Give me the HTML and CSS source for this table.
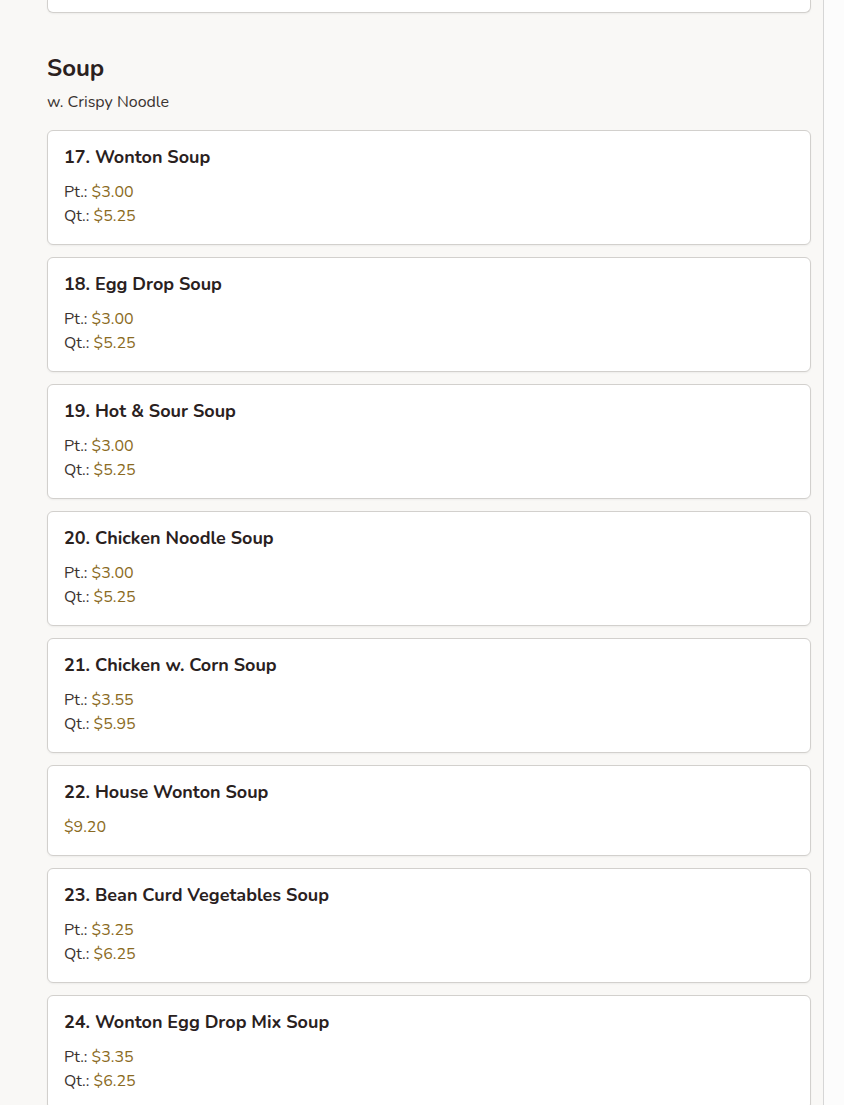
FILE: index.html
```html
<!DOCTYPE html>
<html>
<head>
<meta charset="utf-8">
<link rel="stylesheet" href="styles.css">
</head>
<body>
<main class="menu">
  <div class="card card-tail"></div>

  <section class="section">
    <h2 class="section-title">Soup</h2>
    <p class="section-note">w. Crispy Noodle</p>

    <div class="items">
      <article class="card">
        <h3 class="item-name">17. Wonton Soup</h3>
        <div class="price-row">Pt.: <span class="price">$3.00</span></div>
        <div class="price-row">Qt.: <span class="price">$5.25</span></div>
      </article>
      <article class="card">
        <h3 class="item-name">18. Egg Drop Soup</h3>
        <div class="price-row">Pt.: <span class="price">$3.00</span></div>
        <div class="price-row">Qt.: <span class="price">$5.25</span></div>
      </article>
      <article class="card">
        <h3 class="item-name">19. Hot &amp; Sour Soup</h3>
        <div class="price-row">Pt.: <span class="price">$3.00</span></div>
        <div class="price-row">Qt.: <span class="price">$5.25</span></div>
      </article>
      <article class="card">
        <h3 class="item-name">20. Chicken Noodle Soup</h3>
        <div class="price-row">Pt.: <span class="price">$3.00</span></div>
        <div class="price-row">Qt.: <span class="price">$5.25</span></div>
      </article>
      <article class="card">
        <h3 class="item-name">21. Chicken w. Corn Soup</h3>
        <div class="price-row">Pt.: <span class="price">$3.55</span></div>
        <div class="price-row">Qt.: <span class="price">$5.95</span></div>
      </article>
      <article class="card">
        <h3 class="item-name">22. House Wonton Soup</h3>
        <div class="price-row"><span class="price">$9.20</span></div>
      </article>
      <article class="card">
        <h3 class="item-name">23. Bean Curd Vegetables Soup</h3>
        <div class="price-row">Pt.: <span class="price">$3.25</span></div>
        <div class="price-row">Qt.: <span class="price">$6.25</span></div>
      </article>
      <article class="card">
        <h3 class="item-name">24. Wonton Egg Drop Mix Soup</h3>
        <div class="price-row">Pt.: <span class="price">$3.35</span></div>
        <div class="price-row">Qt.: <span class="price">$6.25</span></div>
      </article>
    </div>
  </section>
</main>
</body>
</html>
```
FILE: styles.css
```css
html, body {
  margin: 0;
  padding: 0;
}
body {
  background: #fcfcfc;
  font-family: "Nunito", "Open Sans", "Lato", sans-serif;
  color: #2a211e;
}
.menu {
  box-sizing: border-box;
  width: 824px;
  min-height: 1105px;
  padding: 0 12px 0 47px;
  background: #f9f8f6;
  border-right: 1px solid #d6d6d6;
  overflow: hidden;
}
.card {
  background: #ffffff;
  border: 1px solid #d2d0cd;
  border-radius: 6px;
  padding: 15px 16px 16px;
  box-shadow: 0 1px 2px rgba(0, 0, 0, 0.05);
}
.card-tail {
  height: 12px;
  padding: 0;
  border-top: none;
  border-radius: 0 0 6px 6px;
}
.section {
  padding-top: 39px;
}
.section-title {
  margin: 0;
  font-size: 24px;
  line-height: 32px;
  font-weight: 700;
  color: #2b211e;
}
.section-note {
  margin: 8px 0 0;
  font-size: 16px;
  line-height: 20px;
  color: #3a3330;
}
.items {
  margin-top: 18px;
  display: flex;
  flex-direction: column;
  gap: 12px;
}
.item-name {
  margin: 0 0 12px;
  font-size: 18px;
  line-height: 22px;
  font-weight: 700;
  color: #2a211e;
}
.price-row {
  font-size: 16px;
  line-height: 24px;
  color: #3b3330;
}
.price {
  color: #8a6a22;
}
```
